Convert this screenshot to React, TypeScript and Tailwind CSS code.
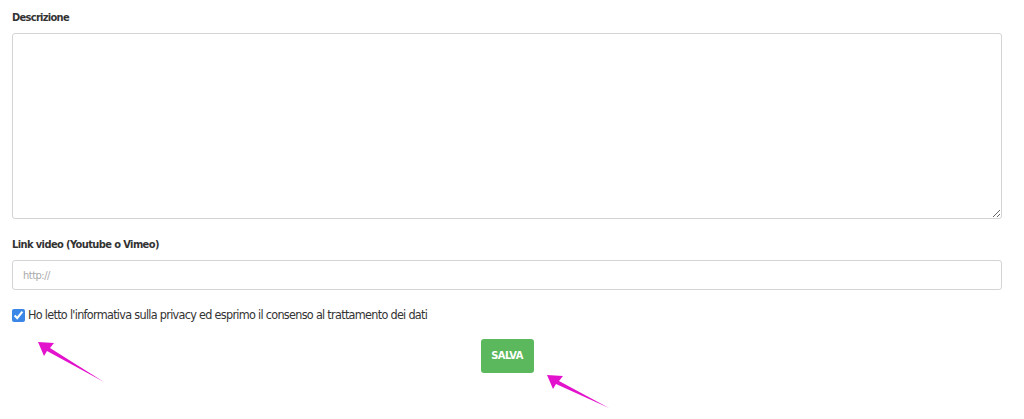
import React from "react";

const font = { fontFamily: '"DejaVu Sans Condensed", "DejaVu Sans", sans-serif' };

function Arrow({ d }: { d: string }) {
  return <path d={d} fill="#e312cc" />;
}

export default function App() {
  return (
    <div className="relative h-[419px] w-[1024px] overflow-hidden bg-white text-[#333]" style={font}>
      <form className="flex w-[1014px] flex-col px-3 pt-[9px]">
        <label className="mb-[6px] text-[11px] font-bold leading-[18px] tracking-[-0.7px]">Descrizione</label>
        <textarea className="h-[186px] w-[990px] resize-y rounded-[3px] border border-[#d4d4d4] bg-white" />

        <label className="mb-[6px] mt-[17px] text-[11px] font-bold leading-[18px] tracking-[-0.6px]">
          Link video (Youtube o Vimeo)
        </label>
        <input
          type="text"
          placeholder="http://"
          className="h-[30px] w-[990px] rounded-[3px] border border-[#d4d4d4] px-[10px] text-[11px] tracking-[-0.5px] placeholder:text-[#aaa] outline-none"
        />

        <label className="mt-[16px] flex items-center gap-[3px] text-[12.5px] leading-[18px] tracking-[-0.7px]">
          <input type="checkbox" defaultChecked className="m-0 h-[13px] w-[13px] accent-[#3b87e8]" />
          Ho letto l'informativa sulla privacy ed esprimo il consenso al trattamento dei dati
        </label>

        <div className="mt-[15px] flex justify-center">
          <button
            type="button"
            className="h-[34px] w-[53px] rounded-[3px] bg-[#5cb85c] text-[11px] font-bold text-white tracking-[-0.5px]"
          >
            SALVA
          </button>
        </div>
      </form>

      <svg className="pointer-events-none absolute left-0 top-0" width="1024" height="419">
        <Arrow d="M38 342 L54 343 L50 348 L104 382 L47 351 L44 356 Z" />
        <Arrow d="M547 375 L563 376 L559 381 L609 408 L556 384 L553 389 Z" />
      </svg>
    </div>
  );
}
